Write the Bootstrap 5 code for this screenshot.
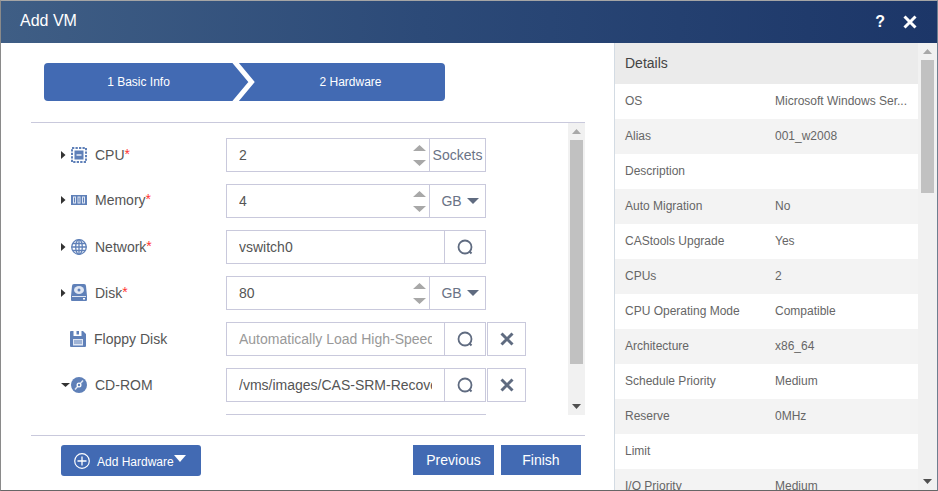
<!DOCTYPE html>
<html lang="en">
<head>
<meta charset="utf-8">
<title>Add VM</title>
<link rel="stylesheet" href="https://cdn.jsdelivr.net/npm/bootstrap@5.3.0/dist/css/bootstrap.min.css">
<style>
html,body{height:491px;overflow:hidden;background:#fff}
body{font-family:"Liberation Sans",Arial,sans-serif;color:#555;font-size:14px}
.vm-win{height:491px;border:1px solid #8a8a8a;border-top-color:#a5a5a5;border-right-color:#6f7f90;border-bottom-color:#666}
.vm-head{height:42px;flex:none;padding:0 20px 0 19px;color:#fff;background:linear-gradient(90deg,#3f5e85 0%,#2c4a78 45%,#1c3668 100%)}
.vm-title{font-size:16px;line-height:1;position:relative;top:-1px}
.vm-help{font-size:16px;font-weight:700;line-height:1;margin-right:18px}
.vm-main{height:447px}
.vm-left{width:614px;flex:none;border-right:1px solid #d3dbe3}
.vm-stepper{margin:20px 0 0 43px;width:401px;height:38px;background:#426ab3;border-radius:4px;color:#fff;font-size:12px;position:relative}
.vm-s1{width:189px}
.vm-s2{width:187px;margin-left:24px}
.vm-chev{position:absolute;left:185px;top:0}
.vm-pane{margin:21px 0 0 30px;width:554px;height:293px;border-top:1px solid #c9c9dc;overflow:hidden}
.vm-form{width:537px;height:292px;overflow:hidden;padding-top:15px}
.vm-row{height:34px;margin-bottom:12px}
.vm-lab{width:195px;padding-left:30px;flex:none;color:#555;font-size:14px}
.vm-up{margin-top:-2px}
.vm-car{width:10px;flex:none;height:16px}
.vm-ico{width:16px;height:18px;flex:none;margin-right:8px}
.vm-ico-f{margin-left:-1px}
.vm-req{color:#f33;position:relative;top:-1px}
.vm-group{width:260px;height:34px;flex:none}
.vm-group .form-control{height:34px;border-radius:0!important;border:1px solid #c9c9dc;font-size:14px;color:#555;padding:0 12px;box-shadow:none}
.vm-group .form-control::placeholder{color:#999}
.vm-spin{padding:0 3px 0 0!important}
.vm-inner{flex:1;min-width:0;border:0;outline:0;background:transparent;font-size:14px;color:#555;padding:0 12px;height:32px}
.vm-add{flex:none;height:34px;border:1px solid #c9c9dc;margin-left:-1px;background:#fff;color:#6a7386;font-size:14px;padding:0;border-radius:0!important}
.vm-w57{width:57px}
.vm-w42{width:42px}
.vm-x{width:39px;height:34px;margin-left:1px;border:1px solid #c9c9dc;background:#fff;flex:none}
.vm-gb{gap:5px;padding-left:5px}
.vm-sb{width:17px;flex:none;background:#f1f1f1}
.vm-sb-btn{height:17px;flex:none}
.vm-thumb{background:#c1c1c1;margin:0 2px}
.vm-sb-pad{flex:1}
.vm-foot{margin:20px 0 0 30px;width:554px;border-top:1px solid #c9c9dc;padding-top:9px}
.vm-btn{background:#426ab3;color:#fff;border:0;border-radius:0;font-size:14px;height:30px;padding:0}
.vm-btn:hover{background:#426ab3;color:#fff}
.vm-addhw{width:140px;height:31px;margin-left:30px;border-radius:3px;font-size:12px;padding-left:13px;gap:7px}
.vm-hwtxt{padding-top:2px}
.vm-hwcar{margin-top:2px}
.vm-prev{width:81px;margin-right:7px}
.vm-fin{width:80px;margin-right:4px}
.vm-det{width:303px;flex:none;font-size:12px;color:#666;overflow:hidden}
.vm-det-h{height:41px;flex:none;background:#ebebeb;font-size:14px;color:#444;padding:0 10px}
.vm-det-r{height:35px;flex:none;padding:0 10px 2px;background:#fff}
.vm-det-r:nth-child(even){background:#f3f3f3}
.vm-dk{width:150px;flex:none}
.vm-dv{width:133px}
.vm-sb2{width:19px}
.vm-sb2 .vm-thumb{margin:0 3px}
</style>
</head>
<body>
<div class="vm-win d-flex flex-column">
  <div class="vm-head d-flex align-items-center">
    <span class="vm-title flex-grow-1">Add VM</span>
    <span class="vm-help">?</span>
    <svg width="14" height="14" viewBox="0 0 14 14"><path d="M1.500 1.500l11 11M12.500 1.500l-11 11" stroke="#fff" stroke-width="3" fill="none"/></svg>
  </div>
  <div class="vm-main d-flex">
    <div class="vm-left">
      <div class="vm-stepper d-flex align-items-center">
        <div class="vm-s1 text-center">1 Basic Info</div>
        <div class="vm-s2 text-center">2 Hardware</div>
        <svg class="vm-chev" width="26" height="38" viewBox="0 0 26 38"><path d="M5 -2L22.500 19L5 40" stroke="#fff" stroke-width="5" fill="none"/></svg>
      </div>
      <div class="vm-pane d-flex">
        <div class="vm-form flex-grow-1">

          <div class="vm-row d-flex align-items-center">
            <div class="vm-lab d-flex align-items-center">
              <svg class="vm-car" viewBox="0 0 10 16"><path d="M0 4l4.500 4L0 12z" fill="#333"/></svg>
              <svg class="vm-ico" viewBox="0 0 16 18"><rect x="1" y="2" width="14" height="14" fill="none" stroke="#5f80b8" stroke-width="2" stroke-dasharray="2.300 1.200"/><rect x="3.500" y="4.500" width="9" height="9" fill="#5f80b8"/><rect x="5.500" y="8" width="5" height="2" fill="#c6d2e8"/></svg>
              <span>CPU<span class="vm-req">*</span></span>
            </div>
            <div class="input-group vm-group flex-nowrap">
              <div class="form-control vm-spin d-flex align-items-center">
                <input class="vm-inner" value="2" aria-label="CPU">
                <svg width="13" height="21" viewBox="0 0 13 21"><path d="M6.500 0L13 6H0zM0 15h13l-6.500 6z" fill="#a8a8a8"/></svg>
              </div>
              <span class="vm-add vm-w57 d-flex align-items-center justify-content-center">Sockets</span>
            </div>
          </div>

          <div class="vm-row d-flex align-items-center">
            <div class="vm-lab vm-up d-flex align-items-center">
              <svg class="vm-car" viewBox="0 0 10 16"><path d="M0 4l4.500 4L0 12z" fill="#333"/></svg>
              <svg class="vm-ico" viewBox="0 0 16 18"><path fill="#5f80b8" d="M0 4h16v10H0z"/><path fill="#dfe6f3" d="M2 5.500h3v7H2zM6.500 5.500h3v7h-3zM11 5.500h3v7h-3z"/><path fill="#5f80b8" d="M3 6.500h1v5H3zM7.500 6.500h1v5h-1zM12 6.500h1v5h-1z"/></svg>
              <span>Memory<span class="vm-req">*</span></span>
            </div>
            <div class="input-group vm-group flex-nowrap">
              <div class="form-control vm-spin d-flex align-items-center">
                <input class="vm-inner" value="4" aria-label="Memory">
                <svg width="13" height="21" viewBox="0 0 13 21"><path d="M6.500 0L13 6H0zM0 15h13l-6.500 6z" fill="#a8a8a8"/></svg>
              </div>
              <span class="vm-add vm-w57 vm-gb d-flex align-items-center justify-content-center">GB <svg width="12" height="6" viewBox="0 0 12 6"><path d="M0 0h12L6 6z" fill="#5f6b80"/></svg></span>
            </div>
          </div>

          <div class="vm-row d-flex align-items-center">
            <div class="vm-lab d-flex align-items-center">
              <svg class="vm-car" viewBox="0 0 10 16"><path d="M0 4l4.500 4L0 12z" fill="#333"/></svg>
              <svg class="vm-ico" viewBox="0 0 16 18"><g fill="none" stroke="#5f80b8" stroke-width="1.300"><circle cx="8" cy="9" r="7.300"/><ellipse cx="8" cy="9" rx="3.300" ry="7.300"/><path d="M8 1.700v14.600M.7 9h14.600M1.800 5.500h12.400M1.800 12.500h12.400"/></g></svg>
              <span>Network<span class="vm-req">*</span></span>
            </div>
            <div class="input-group vm-group flex-nowrap">
              <input class="form-control" value="vswitch0" aria-label="Network">
              <span class="vm-add vm-w42 d-flex align-items-center justify-content-center"><svg width="17" height="17" viewBox="0 0 17 17"><circle cx="8" cy="8" r="6.500" fill="none" stroke="#5f6b80" stroke-width="1.800"/><path d="M12.300 12.300l2.200 2.200" stroke="#5f6b80" stroke-width="2"/></svg></span>
            </div>
          </div>

          <div class="vm-row d-flex align-items-center">
            <div class="vm-lab d-flex align-items-center">
              <svg class="vm-car" viewBox="0 0 10 16"><path d="M0 4l4.500 4L0 12z" fill="#333"/></svg>
              <svg class="vm-ico" viewBox="0 0 16 18"><path fill="#5f80b8" d="M3 0h10a2 2 0 0 1 2 2l1 10v4a1 1 0 0 1-1 1H1a1 1 0 0 1-1-1v-4L1 2a2 2 0 0 1 2-2z"/><ellipse cx="8" cy="6" rx="5" ry="4" fill="#dfe6f3"/><circle cx="8" cy="6" r="1.500" fill="#5f80b8"/><path d="M1 12.500h14" stroke="#dfe6f3"/><rect x="12" y="14" width="2" height="1.500" fill="#fff"/></svg>
              <span>Disk<span class="vm-req">*</span></span>
            </div>
            <div class="input-group vm-group flex-nowrap">
              <div class="form-control vm-spin d-flex align-items-center">
                <input class="vm-inner" value="80" aria-label="Disk">
                <svg width="13" height="21" viewBox="0 0 13 21"><path d="M6.500 0L13 6H0zM0 15h13l-6.500 6z" fill="#a8a8a8"/></svg>
              </div>
              <span class="vm-add vm-w57 vm-gb d-flex align-items-center justify-content-center">GB <svg width="12" height="6" viewBox="0 0 12 6"><path d="M0 0h12L6 6z" fill="#5f6b80"/></svg></span>
            </div>
          </div>

          <div class="vm-row d-flex align-items-center">
            <div class="vm-lab d-flex align-items-center">
              <span class="vm-car"></span>
              <svg class="vm-ico vm-ico-f" viewBox="0 0 16 18"><path fill="#5f80b8" d="M1 1h2.500v5h8V1H13l3 3v12a1 1 0 0 1-1 1H1a1 1 0 0 1-1-1V2a1 1 0 0 1 1-1z"/><rect x="6.500" y="1" width="2.500" height="3.500" fill="#5f80b8"/><rect x="3" y="9" width="10" height="6.500" fill="#dfe6f3"/><path d="M4 11h8M4 13h8" stroke="#5f80b8"/></svg>
              <span>Floppy Disk</span>
            </div>
            <div class="input-group vm-group flex-nowrap">
              <input class="form-control" placeholder="Automatically Load High-Speed Drivers" aria-label="Floppy Disk">
              <span class="vm-add vm-w42 d-flex align-items-center justify-content-center"><svg width="17" height="17" viewBox="0 0 17 17"><circle cx="8" cy="8" r="6.500" fill="none" stroke="#5f6b80" stroke-width="1.800"/><path d="M12.300 12.300l2.200 2.200" stroke="#5f6b80" stroke-width="2"/></svg></span>
            </div>
            <span class="vm-x d-flex align-items-center justify-content-center"><svg width="14" height="14" viewBox="0 0 14 14"><path d="M1.500 1.500l11 11M12.500 1.500l-11 11" stroke="#5f6b80" stroke-width="3"/></svg></span>
          </div>

          <div class="vm-row d-flex align-items-center">
            <div class="vm-lab d-flex align-items-center">
              <svg class="vm-car" viewBox="0 0 10 16"><path d="M0 6h9L4.500 10z" fill="#333"/></svg>
              <svg class="vm-ico" viewBox="0 0 16 18"><circle cx="8" cy="9" r="8" fill="#5f80b8"/><path d="M4 13.500L12 4.500" stroke="#dfe6f3" stroke-width="1.500"/><circle cx="8" cy="9" r="2.500" fill="#fff"/><circle cx="8" cy="9" r="1.200" fill="#5f80b8"/></svg>
              <span>CD-ROM</span>
            </div>
            <div class="input-group vm-group flex-nowrap">
              <input class="form-control" value="/vms/images/CAS-SRM-Recovery.iso" aria-label="CD-ROM">
              <span class="vm-add vm-w42 d-flex align-items-center justify-content-center"><svg width="17" height="17" viewBox="0 0 17 17"><circle cx="8" cy="8" r="6.500" fill="none" stroke="#5f6b80" stroke-width="1.800"/><path d="M12.300 12.300l2.200 2.200" stroke="#5f6b80" stroke-width="2"/></svg></span>
            </div>
            <span class="vm-x d-flex align-items-center justify-content-center"><svg width="14" height="14" viewBox="0 0 14 14"><path d="M1.500 1.500l11 11M12.500 1.500l-11 11" stroke="#5f6b80" stroke-width="3"/></svg></span>
          </div>

          <div class="vm-row d-flex align-items-center">
            <div class="vm-lab"></div>
            <div class="input-group vm-group flex-nowrap"><input class="form-control" aria-label="Source"></div>
          </div>
        </div>
        <div class="vm-sb d-flex flex-column">
          <div class="vm-sb-btn d-flex align-items-center justify-content-center"><svg width="9" height="5" viewBox="0 0 9 5"><path d="M4.500 0L9 5H0z" fill="#a8a8a8"/></svg></div>
          <div class="vm-thumb" style="height:224px"></div>
          <div class="vm-sb-pad"></div>
          <div class="vm-sb-btn d-flex align-items-center justify-content-center"><svg width="9" height="5" viewBox="0 0 9 5"><path d="M0 0h9L4.500 5z" fill="#505050"/></svg></div>
        </div>
      </div>
      <div class="vm-foot d-flex align-items-start">
        <button class="btn vm-btn vm-addhw d-flex align-items-center" type="button"><svg width="16" height="16" viewBox="0 0 16 16"><circle cx="8" cy="8" r="7.300" fill="none" stroke="#fff" stroke-width="1.200"/><path d="M8 3.500v9M3.500 8h9" stroke="#fff" stroke-width="1.300"/></svg><span class="vm-hwtxt d-flex align-items-start">Add Hardware<svg class="vm-hwcar" width="12" height="7" viewBox="0 0 12 7"><path d="M0 0h12L6 7z" fill="#fff"/></svg></span></button>
        <div class="flex-grow-1"></div>
        <button class="btn vm-btn vm-prev" type="button">Previous</button>
        <button class="btn vm-btn vm-fin" type="button">Finish</button>
      </div>
    </div>
    <div class="vm-det d-flex flex-column">
      <div class="vm-det-h d-flex align-items-center">Details</div>
      <div class="d-flex flex-column">
        <div class="vm-det-r d-flex align-items-center"><div class="vm-dk">OS</div><div class="vm-dv text-nowrap">Microsoft Windows Ser...</div></div>
        <div class="vm-det-r d-flex align-items-center"><div class="vm-dk">Alias</div><div class="vm-dv">001_w2008</div></div>
        <div class="vm-det-r d-flex align-items-center"><div class="vm-dk">Description</div><div class="vm-dv"></div></div>
        <div class="vm-det-r d-flex align-items-center"><div class="vm-dk">Auto Migration</div><div class="vm-dv">No</div></div>
        <div class="vm-det-r d-flex align-items-center"><div class="vm-dk">CAStools Upgrade</div><div class="vm-dv">Yes</div></div>
        <div class="vm-det-r d-flex align-items-center"><div class="vm-dk">CPUs</div><div class="vm-dv">2</div></div>
        <div class="vm-det-r d-flex align-items-center"><div class="vm-dk">CPU Operating Mode</div><div class="vm-dv">Compatible</div></div>
        <div class="vm-det-r d-flex align-items-center"><div class="vm-dk">Architecture</div><div class="vm-dv">x86_64</div></div>
        <div class="vm-det-r d-flex align-items-center"><div class="vm-dk">Schedule Priority</div><div class="vm-dv">Medium</div></div>
        <div class="vm-det-r d-flex align-items-center"><div class="vm-dk">Reserve</div><div class="vm-dv">0MHz</div></div>
        <div class="vm-det-r d-flex align-items-center"><div class="vm-dk">Limit</div><div class="vm-dv"></div></div>
        <div class="vm-det-r d-flex align-items-center"><div class="vm-dk">I/O Priority</div><div class="vm-dv">Medium</div></div>
      </div>
    </div>
    <div class="vm-sb vm-sb2 d-flex flex-column">
      <div class="vm-sb-btn d-flex align-items-center justify-content-center"><svg width="9" height="5" viewBox="0 0 9 5"><path d="M4.500 0L9 5H0z" fill="#a8a8a8"/></svg></div>
      <div class="vm-thumb" style="height:133px"></div>
      <div class="vm-sb-pad"></div>
      <div class="vm-sb-btn d-flex align-items-center justify-content-center"><svg width="9" height="5" viewBox="0 0 9 5"><path d="M0 0h9L4.500 5z" fill="#505050"/></svg></div>
    </div>
  </div>
</div>
<script src="https://cdn.jsdelivr.net/npm/bootstrap@5.3.0/dist/js/bootstrap.bundle.min.js"></script>
</body>
</html>
